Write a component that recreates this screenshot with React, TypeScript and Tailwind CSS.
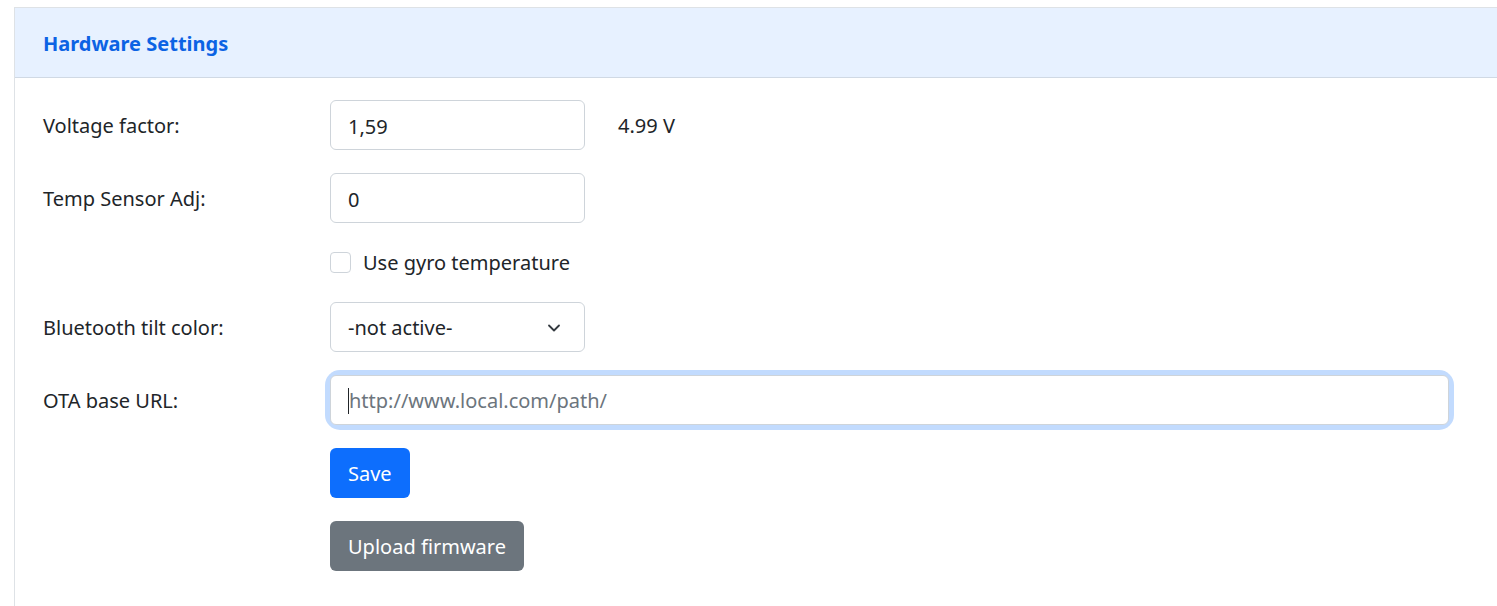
import { ChevronDown } from "lucide-react";

const LABEL = "w-[287px] shrink-0 pt-[2px] text-[20px] text-[#212529]";
const INPUT =
  "h-[50px] rounded-[6px] border border-[#ced4da] bg-white px-[17px] pt-[2px] text-[20px] text-[#212529] outline-none";

function Row({ label, children, className = "" }: { label?: string; children: React.ReactNode; className?: string }) {
  return (
    <div className={`flex items-center ${className}`}>
      <div className={LABEL}>{label}</div>
      {children}
    </div>
  );
}

export default function App() {
  return (
    <div className="min-h-[606px] bg-white pl-[14px] pt-[7px] font-['Noto_Sans',sans-serif]">
      <div className="min-h-[599px] border-l border-t border-[#dee2e6]">
        {/* Header */}
        <div className="flex h-[70px] items-center border-b border-[#d0d9e4] bg-[#e7f1ff] pl-[28px] pt-[2px]">
          <h2 className="text-[20px] font-bold text-[#0c63e4]">Hardware Settings</h2>
        </div>

        {/* Body */}
        <div className="flex flex-col pl-[28px] pr-[48px] pt-[22px]">
          <Row label="Voltage factor:">
            <input className={`${INPUT} w-[255px]`} defaultValue="1,59" />
            <span className="ml-[33px] pt-[2px] text-[20px] text-[#212529]">4.99 V</span>
          </Row>

          <Row label="Temp Sensor Adj:" className="mt-[23px]">
            <input className={`${INPUT} w-[255px]`} defaultValue="0" />
          </Row>

          <Row className="mt-[23px] h-[32px]">
            <label className="flex items-center gap-[12px] text-[20px] text-[#212529]">
              <span className="h-[21px] w-[21px] rounded-[4px] border border-[#ced4da] bg-white" />
              <span className="pt-[2px]">Use gyro temperature</span>
            </label>
          </Row>

          <Row label="Bluetooth tilt color:" className="mt-[24px]">
            <div className={`${INPUT} flex w-[255px] items-center justify-between bg-[#e9ecef] pr-[20px]`}>
              <span>-not active-</span>
              <ChevronDown className="h-[20px] w-[20px] text-[#343a40]" strokeWidth={2.2} />
            </div>
          </Row>

          <Row label="OTA base URL:" className="mt-[23px]">
            <div className="flex-1 rounded-[10px] shadow-[0_0_0_5px_rgba(13,110,253,0.25)]">
              <div className={`${INPUT} flex w-full items-center border-[#86b7fe]`}>
                <span className="h-[26px] w-px bg-[#212529]" />
                <span className="text-[#6c757d]">http://www.local.com/path/</span>
              </div>
            </div>
          </Row>

          <Row className="mt-[23px]">
            <button className="h-[50px] rounded-[6px] bg-[#0d6efd] px-[18px] pt-[2px] text-[20px] text-white">Save</button>
          </Row>

          <Row className="mt-[23px]">
            <button className="h-[50px] rounded-[6px] bg-[#6c757d] px-[18px] pt-[2px] text-[20px] text-white">
              Upload firmware
            </button>
          </Row>
        </div>
      </div>
    </div>
  );
}
